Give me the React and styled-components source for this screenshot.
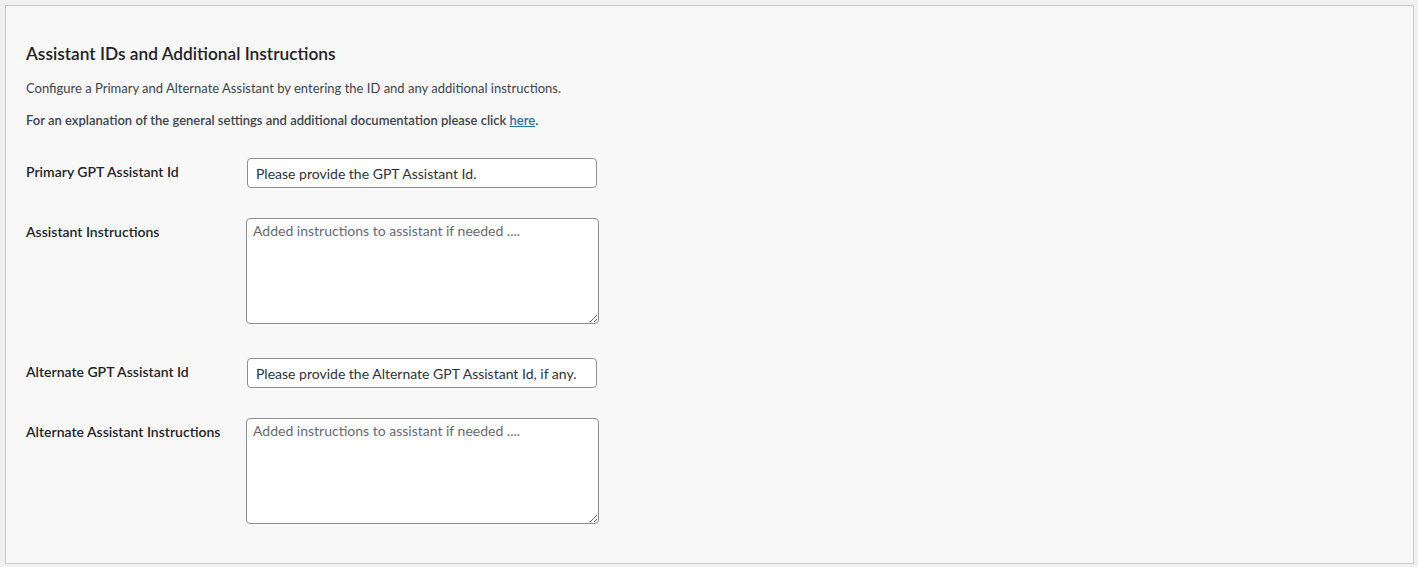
import React from "react";
import styled, { createGlobalStyle } from "styled-components";

const GlobalStyle = createGlobalStyle`
  html, body {
    margin: 0;
    padding: 0;
    background: #f0f0f1;
  }
  body {
    padding: 5px 4px 4px 5px;
    font-family: Lato, "Liberation Sans", sans-serif;
    color: #3c434a;
  }
`;

const Panel = styled.div`
  background: #f8f8f8;
  border: 1px solid #c9c9c9;
  padding: 37px 20px 20px 20px;
`;

const Heading = styled.h2`
  margin: 0 0 14px 0;
  font-size: 17.3px;
  font-weight: 600;
  color: #1d2327;
  line-height: 1.3;
`;

const Text = styled.p`
  margin: 0 0 13px 0;
  font-size: 13px;
  line-height: 19px;
  color: #3c434a;
  font-weight: ${(p) => (p.$strong ? 600 : 400)};
`;

const Link = styled.a`
  color: #2271b1;
  text-decoration: underline;
`;

const Form = styled.div`
  display: flex;
  flex-direction: column;
  margin-top: 3px;
`;

const Row = styled.div`
  display: grid;
  grid-template-columns: 220px 1fr;
  align-items: start;
`;

const Label = styled.label`
  padding: 20px 10px 20px 0;
  font-size: 14px;
  font-weight: 600;
  line-height: 1.3;
  color: #1d2327;
`;

const Cell = styled.div`
  padding: 15px 10px 15px 0;
  display: flex;
`;

const Input = styled.input`
  box-sizing: border-box;
  width: 350px;
  height: 30px;
  margin-left: 1px;
  padding: 0 8px;
  border: 1px solid #8c8f94;
  border-radius: 4px;
  background: #fff;
  font-family: inherit;
  font-size: 14px;
  color: #2c3338;
  outline: none;
`;

const TextArea = styled.textarea`
  box-sizing: border-box;
  width: 353px;
  height: 106px;
  padding: 2px 6px;
  border: 1px solid #8c8f94;
  border-radius: 4px;
  background: #fff;
  font-family: inherit;
  font-size: 14px;
  line-height: 1.4;
  color: #2c3338;
  outline: none;
  margin-bottom: 4px;

  &::placeholder {
    color: #646970;
    opacity: 1;
  }
`;

const fields = [
  { label: "Primary GPT Assistant Id", type: "input", value: "Please provide the GPT Assistant Id." },
  { label: "Assistant Instructions", type: "textarea" },
  { label: "Alternate GPT Assistant Id", type: "input", value: "Please provide the Alternate GPT Assistant Id, if any." },
  { label: "Alternate Assistant Instructions", type: "textarea" },
];

export default function App() {
  return (
    <>
      <GlobalStyle />
      <Panel>
        <Heading>Assistant IDs and Additional Instructions</Heading>
        <Text>Configure a Primary and Alternate Assistant by entering the ID and any additional instructions.</Text>
        <Text $strong>
          For an explanation of the general settings and additional documentation please click <Link href="#">here</Link>.
        </Text>
        <Form>
          {fields.map((f) => (
            <Row key={f.label}>
              <Label>{f.label}</Label>
              <Cell>
                {f.type === "input" ? (
                  <Input type="text" defaultValue={f.value} />
                ) : (
                  <TextArea placeholder="Added instructions to assistant if needed ...." />
                )}
              </Cell>
            </Row>
          ))}
        </Form>
      </Panel>
    </>
  );
}
